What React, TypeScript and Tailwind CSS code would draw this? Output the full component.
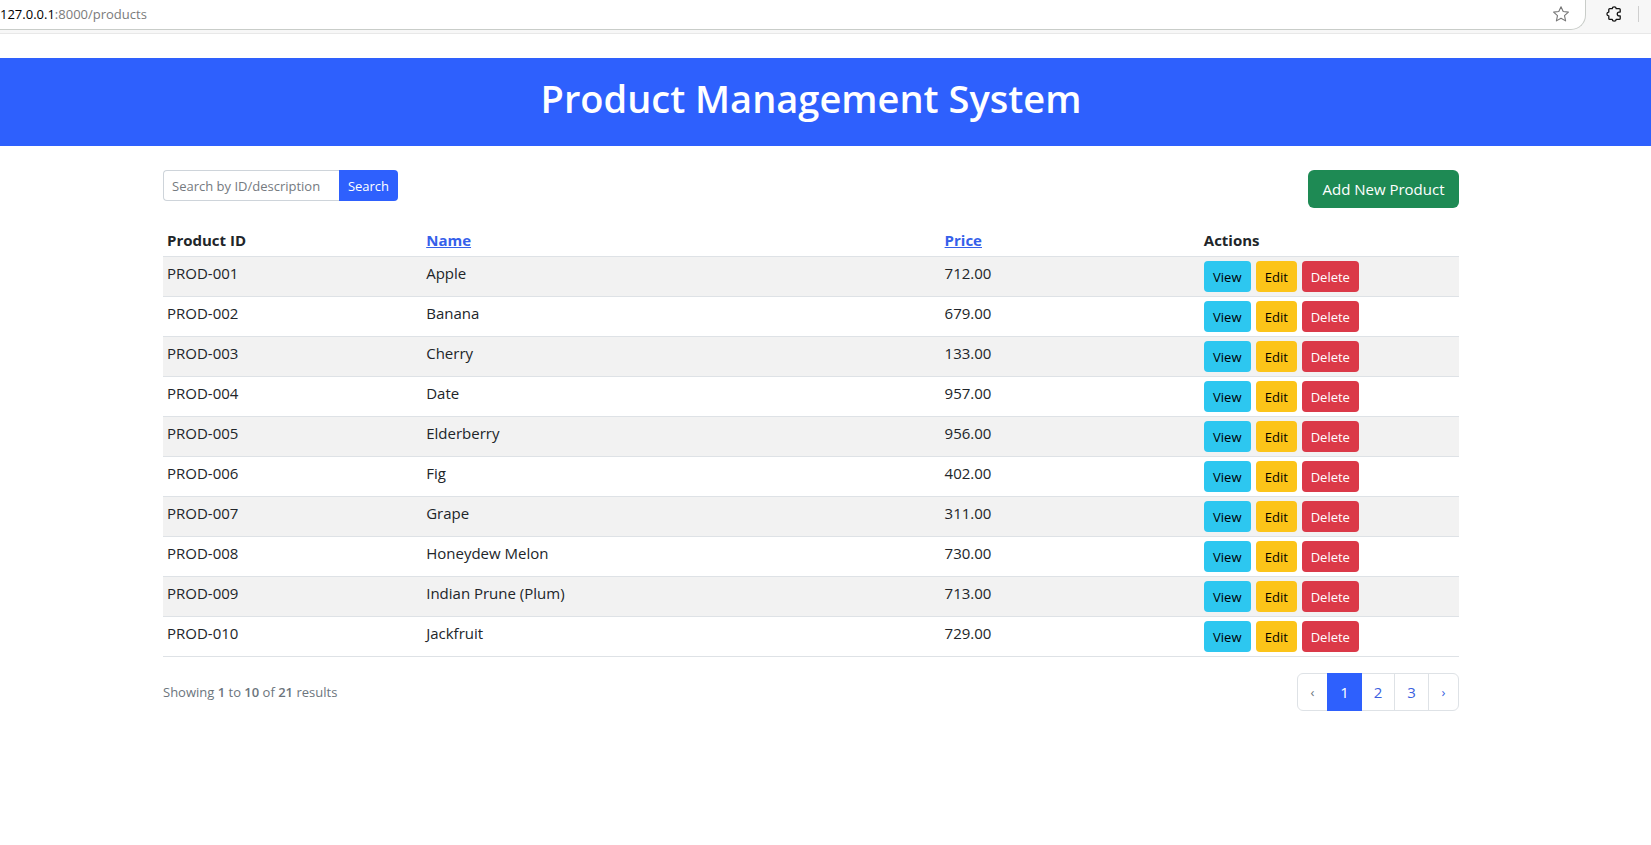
import React from 'react';

type Product = { id: string; name: string; price: string };

const products: Product[] = [
  { id: 'PROD-001', name: 'Apple', price: '712.00' },
  { id: 'PROD-002', name: 'Banana', price: '679.00' },
  { id: 'PROD-003', name: 'Cherry', price: '133.00' },
  { id: 'PROD-004', name: 'Date', price: '957.00' },
  { id: 'PROD-005', name: 'Elderberry', price: '956.00' },
  { id: 'PROD-006', name: 'Fig', price: '402.00' },
  { id: 'PROD-007', name: 'Grape', price: '311.00' },
  { id: 'PROD-008', name: 'Honeydew Melon', price: '730.00' },
  { id: 'PROD-009', name: 'Indian Prune (Plum)', price: '713.00' },
  { id: 'PROD-010', name: 'Jackfruit', price: '729.00' },
];

function BrowserBar() {
  return (
    <div className="flex h-[34px] items-start border-b border-[#e8e8e8] bg-[#f7f7f7]">
      <div className="flex h-[30px] flex-1 items-center justify-between rounded-br-[15px] border-r border-b border-[#c9cdc9] bg-white pr-4 pb-0.5 text-[13px]">
        <span className="text-[#7b7b7b]">
          <span className="text-black">127.0.0.1</span>:8000/products
        </span>
        <button type="button" aria-label="Add to favorites">
          <svg width="16" height="16" viewBox="0 0 16 16" fill="none" stroke="#777" strokeWidth="1.1" strokeLinejoin="round">
            <path d="M8 .8 10.2 5.5 15.4 6.1 11.5 9.6 12.6 14.9 8 12.2 3.4 14.9 4.5 9.6.6 6.1 5.8 5.5Z" />
          </svg>
        </button>
      </div>
      <div className="flex h-7 w-[65px] items-center justify-between pr-3 pl-5">
        <button type="button" aria-label="Extensions">
          <svg width="16" height="16" viewBox="0 0 16 16" fill="none" stroke="#111" strokeWidth="1.3" strokeLinejoin="round">
            <path d="M3.8 2.6H6.2C6.4.2 10 .2 10.2 2.6H13.2Q14.2 2.6 14.2 3.6V6.1H13C10.7 6.1 10.7 9.9 13 9.9H14.2V12.4Q14.2 13.4 13.2 13.4H10.2C10 15.8 6.4 15.8 6.2 13.4H3.8Q2.8 13.4 2.8 12.4V9.9C.3 9.7.3 6.3 2.8 6.1V3.6Q2.8 2.6 3.8 2.6Z" />
          </svg>
        </button>
        <span className="h-4 w-px bg-[#cfcfcf]" />
      </div>
    </div>
  );
}

function ProductRow({ product }: { product: Product }) {
  return (
    <tr className="h-10 border-b border-[#dee2e6] align-top odd:bg-[#f2f2f2]">
      <td className="px-1 pt-1">{product.id}</td>
      <td className="px-1 pt-1">{product.name}</td>
      <td className="px-1 pt-1">{product.price}</td>
      <td className="p-1">
        <div className="flex gap-[5px] text-[13px]">
          <a href="#view" className="flex h-[31px] w-[47px] items-center justify-center rounded bg-[#2dc7f0] text-black">View</a>
          <a href="#edit" className="flex h-[31px] w-[41px] items-center justify-center rounded bg-[#fcc419] text-black">Edit</a>
          <button type="button" className="h-[31px] w-[57px] rounded bg-[#db3948] text-white">Delete</button>
        </div>
      </td>
    </tr>
  );
}

function Pagination() {
  return (
    <nav aria-label="Pages" className="flex h-[38px] rounded-md border border-[#dee2e6] text-[#3b5fe0]">
      <button type="button" disabled aria-label="Previous" className="w-[29px] text-[13px] text-[#6c757d]">‹</button>
      <a href="#1" aria-current="page" className="-my-px flex w-[35px] items-center justify-center bg-[#2e60fd] text-white">1</a>
      <a href="#2" className="flex w-[33px] items-center justify-center border-r border-[#dee2e6]">2</a>
      <a href="#3" className="flex w-[34px] items-center justify-center border-r border-[#dee2e6]">3</a>
      <a href="#next" aria-label="Next" className="flex w-[29px] items-center justify-center text-[13px]">›</a>
    </nav>
  );
}

export default function App() {
  return (
    <div className="min-h-screen bg-white font-['Open_Sans',sans-serif] text-[15px] leading-6 text-[#212529]">
      <BrowserBar />
      <header className="mt-6 bg-[#2e60fd] pt-4 pr-[29px] pb-6 text-center text-white">
        <h1 className="text-[38px] leading-[48px] font-semibold">Product Management System</h1>
      </header>
      <div className="pr-[29px]">
        <main className="mx-auto max-w-[1320px] px-3 pt-6">
          <div className="mb-4 flex items-start justify-between">
            <form className="flex h-[31px] text-[13px]" onSubmit={(e) => e.preventDefault()}>
              <input
                type="text"
                aria-label="Search by ID/description"
                placeholder="Search by ID/description"
                className="w-[176px] rounded-l border border-r-0 border-[#ced4da] bg-white px-2 placeholder:text-[#757a80]"
              />
              <button type="submit" className="w-[59px] rounded-r bg-[#2e60fd] text-white">Search</button>
            </form>
            <a href="#new" className="flex h-[38px] w-[151px] items-center justify-center rounded-md bg-[#1e8a54] text-white">
              Add New Product
            </a>
          </div>
          <table className="mb-4 w-full table-fixed border-collapse text-left">
            <colgroup>
              <col className="w-1/5" />
              <col className="w-2/5" />
              <col className="w-1/5" />
              <col className="w-1/5" />
            </colgroup>
            <thead>
              <tr className="border-b border-[#dee2e6]">
                <th className="p-1 font-bold">Product ID</th>
                <th className="p-1 font-bold"><a href="#name" className="text-[#3560ea] underline">Name</a></th>
                <th className="p-1 font-bold"><a href="#price" className="text-[#3560ea] underline">Price</a></th>
                <th className="p-1 font-bold">Actions</th>
              </tr>
            </thead>
            <tbody>
              {products.map((product) => (
                <ProductRow key={product.id} product={product} />
              ))}
            </tbody>
          </table>
          <div className="flex items-center justify-between">
            <p className="text-[13px] text-[#6c757d]">
              Showing <span className="font-semibold">1</span> to <span className="font-semibold">10</span> of{' '}
              <span className="font-semibold">21</span> results
            </p>
            <Pagination />
          </div>
        </main>
      </div>
    </div>
  );
}
